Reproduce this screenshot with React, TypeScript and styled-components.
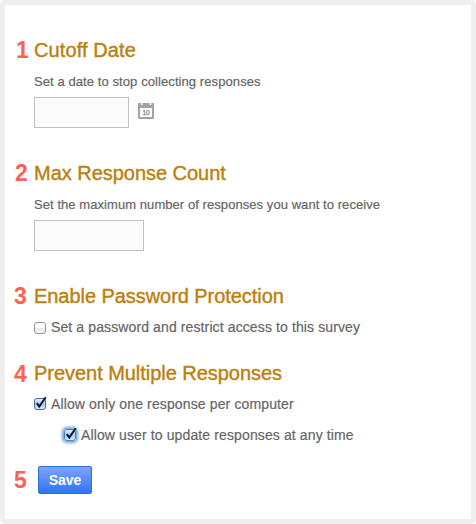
import React from "react";
import styled, { createGlobalStyle, css } from "styled-components";

const GlobalStyle = createGlobalStyle`
  body {
    margin: 0;
    background: #fff;
    font-family: "Liberation Sans", Arial, Helvetica, sans-serif;
  }
`;

const Panel = styled.main`
  box-sizing: border-box;
  width: 476px;
  height: 524px;
  border: 5px solid #eee;
  border-radius: 5px;
  padding: 33px 20px 0 9px;
  background: #fff;
  overflow: hidden;
`;

const Section = styled.section<{ $height: number }>`
  display: grid;
  grid-template-columns: 20px 1fr;
  align-content: start;
  height: ${(p) => p.$height}px;
`;

const Step = styled.span<{ $shift?: number; $drop?: number }>`
  margin: ${(p) => p.$drop ?? 0}px 0 0 ${(p) => p.$shift ?? 0}px;
  font-size: 23px;
  font-weight: bold;
  line-height: 24px;
  color: #ff6251;
`;

const Title = styled.h2<{ $spacing: number }>`
  margin: 0;
  font-size: 20px;
  font-weight: normal;
  line-height: 24px;
  letter-spacing: ${(p) => p.$spacing}px;
  white-space: nowrap;
  color: #bc800c;
  -webkit-text-stroke: 0.4px #bc800c;
`;

const Hint = styled.p<{ $spacing: number }>`
  margin: 12px 0 7px;
  font-size: 13px;
  line-height: 16px;
  letter-spacing: ${(p) => p.$spacing}px;
  white-space: nowrap;
  color: #666;
  -webkit-text-stroke: 0.2px #666;
`;

const Field = styled.div`
  display: flex;
  align-items: flex-start;
  gap: 9px;
`;

const Input = styled.input<{ $width: number }>`
  box-sizing: border-box;
  width: ${(p) => p.$width}px;
  height: 31px;
  margin: 0;
  border: 1px solid #c1c1c1;
  border-radius: 0;
  background: #fbfbfb;
  outline: none;
`;

const CalendarSvg = styled.svg`
  display: block;
  margin-top: 6px;
`;

const Option = styled.label<{ $top: number; $indent?: number; $spacing: number }>`
  display: flex;
  align-items: flex-start;
  gap: 5px;
  height: 16px;
  margin: ${(p) => p.$top}px 0 0 ${(p) => p.$indent ?? 0}px;
  font-size: 14px;
  line-height: 16px;
  letter-spacing: ${(p) => p.$spacing}px;
  white-space: nowrap;
  color: #666;
  -webkit-text-stroke: 0.2px #666;
`;

const Box = styled.span<{ $checked?: boolean; $focused?: boolean }>`
  box-sizing: border-box;
  flex: none;
  width: 12px;
  height: 12px;
  margin-top: 3px;
  border: 1px solid #969696;
  border-radius: 3px;
  background: linear-gradient(#fff, #fafafa 45%, #e9e9e9 55%, #f8f8f8);
  ${(p) =>
    p.$checked &&
    css`
      margin-top: 2px;
      border-color: #4f68a5;
      background: linear-gradient(#e2effd, #a5cdf5 50%, #c9eeff);
    `}
  ${(p) =>
    p.$focused &&
    css`
      border-color: #4d82bd;
      box-shadow: 0 0 3px 2px #6fa3dc;
    `}
`;

const Tick = styled.svg`
  display: block;
  margin: -1px 0 0 -1px;
  overflow: visible;
`;

const Actions = styled.div`
  display: flex;
  align-items: flex-start;
`;

const SaveButton = styled.button`
  box-sizing: border-box;
  width: 54px;
  height: 28px;
  margin-left: 4px;
  padding: 0;
  border: 1px solid #2f6fdb;
  border-radius: 2px;
  background: linear-gradient(#7ba4ff, #2f74f5);
  color: #fff;
  font: bold 14px/26px "Liberation Sans", Arial, sans-serif;
`;

const StepCell = styled.div`
  width: 20px;
  display: flex;
`;

const CalendarIcon = () => (
  <CalendarSvg width="16" height="16" viewBox="0 0 16 16">
    <path
      fill="#a3a3a3"
      fillRule="evenodd"
      d="M1 0H3V2H4.6V0H11.6V2H13.2V0H15Q16 0 16 1V15Q16 16 15 16H1Q0 16 0 15V1Q0 0 1 0ZM2 5V14H14V5Z"
    />
    <text
      x="8"
      y="12"
      textAnchor="middle"
      fontSize="6.5"
      fill="#858585"
      stroke="#858585"
      strokeWidth="0.25"
    >
      10
    </text>
  </CalendarSvg>
);

const CheckBox = ({ checked, focused }: { checked?: boolean; focused?: boolean }) => (
  <Box $checked={checked} $focused={focused}>
    {checked && (
      <Tick width="12" height="12" viewBox="0 0 12 12">
        <path d="M2.8 5.2L5.3 8.6L11.7 -0.8" fill="none" stroke="#0b1426" strokeWidth="2" />
      </Tick>
    )}
  </Box>
);

export default function App() {
  return (
    <>
      <GlobalStyle />
      <Panel>
        <Section $height={123}>
          <Step $shift={2}>1</Step>
          <div>
            <Title $spacing={0.1}>Cutoff Date</Title>
            <Hint $spacing={0.085}>Set a date to stop collecting responses</Hint>
            <Field>
              <Input $width={95} aria-label="Cutoff date" />
              <CalendarIcon />
            </Field>
          </div>
        </Section>
        <Section $height={123}>
          <Step $shift={1}>2</Step>
          <div>
            <Title $spacing={-0.03}>Max Response Count</Title>
            <Hint $spacing={0.065}>Set the maximum number of responses you want to receive</Hint>
            <Input $width={110} aria-label="Maximum responses" />
          </div>
        </Section>
        <Section $height={77}>
          <Step>3</Step>
          <div>
            <Title $spacing={-0.055}>Enable Password Protection</Title>
            <Option $top={11} $spacing={0.115}>
              <CheckBox />
              Set a password and restrict access to this survey
            </Option>
          </div>
        </Section>
        <Section $height={105}>
          <Step $drop={1}>4</Step>
          <div>
            <Title $spacing={-0.04}>Prevent Multiple Responses</Title>
            <Option $top={11} $spacing={0.13}>
              <CheckBox checked />
              Allow only one response per computer
            </Option>
            <Option $top={15} $indent={30} $spacing={0.12}>
              <CheckBox checked focused />
              Allow user to update responses at any time
            </Option>
          </div>
        </Section>
        <Actions>
          <StepCell>
            <Step $drop={2}>5</Step>
          </StepCell>
          <SaveButton type="button">Save</SaveButton>
        </Actions>
      </Panel>
    </>
  );
}
